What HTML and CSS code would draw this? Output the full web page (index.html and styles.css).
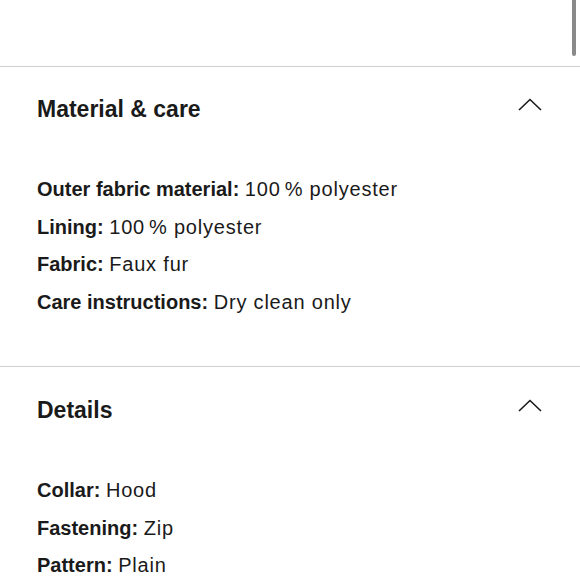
FILE: index.html
```html
<!DOCTYPE html>
<html lang="en">
<head>
<meta charset="utf-8">
<title>Product info</title>
<link rel="stylesheet" href="styles.css">
</head>
<body>
<div class="page">
  <div class="top-space"></div>
  <section class="panel">
    <div class="panel-head">
      <h2 class="panel-title">Material &amp; care</h2>
      <svg class="chevron" width="24" height="13" viewBox="0 0 24 13" aria-hidden="true"><polyline points="1,12 12,1.5 23,12" fill="none" stroke="#1a1a1a" stroke-width="1.6"/></svg>
    </div>
    <ul class="attrs">
      <li><b>Outer fabric material:</b> <span class="val">100<span class="pct">%</span> polyester</span></li>
      <li><b>Lining:</b> <span class="val">100<span class="pct">%</span> polyester</span></li>
      <li><b>Fabric:</b> <span class="val">Faux fur</span></li>
      <li><b>Care instructions:</b> <span class="val">Dry clean only</span></li>
    </ul>
  </section>
  <section class="panel">
    <div class="panel-head">
      <h2 class="panel-title">Details</h2>
      <svg class="chevron" width="24" height="13" viewBox="0 0 24 13" aria-hidden="true"><polyline points="1,12 12,1.5 23,12" fill="none" stroke="#1a1a1a" stroke-width="1.6"/></svg>
    </div>
    <ul class="attrs">
      <li><b>Collar:</b> <span class="val">Hood</span></li>
      <li><b>Fastening:</b> <span class="val">Zip</span></li>
      <li><b>Pattern:</b> <span class="val">Plain</span></li>
    </ul>
  </section>
</div>
<div class="scroll-thumb"></div>
</body>
</html>
```
FILE: styles.css
```css
html, body {
  margin: 0;
  padding: 0;
  overflow: hidden;
  background: #ffffff;
}
body {
  font-family: "Liberation Sans", Arial, sans-serif;
  color: #1a1a1a;
  width: 580px;
  height: 580px;
  position: relative;
}
.top-space {
  height: 66px;
}
.panel {
  border-top: 1px solid #cfcfcf;
  padding: 29px 0 45px;
}
.panel + .panel {
  padding-top: 30px;
}
.panel-head {
  display: flex;
  justify-content: space-between;
  align-items: flex-start;
  padding: 0 38px 0 37px;
}
.panel-title {
  margin: 0;
  font-size: 23px;
  line-height: 26px;
  font-weight: 700;
}
.chevron {
  display: block;
  margin-top: 2px;
}
.attrs {
  list-style: none;
  margin: 49px 0 0;
  padding: 0 0 0 37px;
  font-size: 20px;
  line-height: 37.5px;
}
.attrs b {
  font-weight: 700;
}
.val {
  letter-spacing: 0.8px;
}
.pct {
  margin-left: 4px;
}
.scroll-thumb {
  position: absolute;
  top: 0;
  right: 4px;
  width: 4px;
  height: 56px;
  background: #8a8a8a;
  border-radius: 0 0 2px 2px;
}
```
